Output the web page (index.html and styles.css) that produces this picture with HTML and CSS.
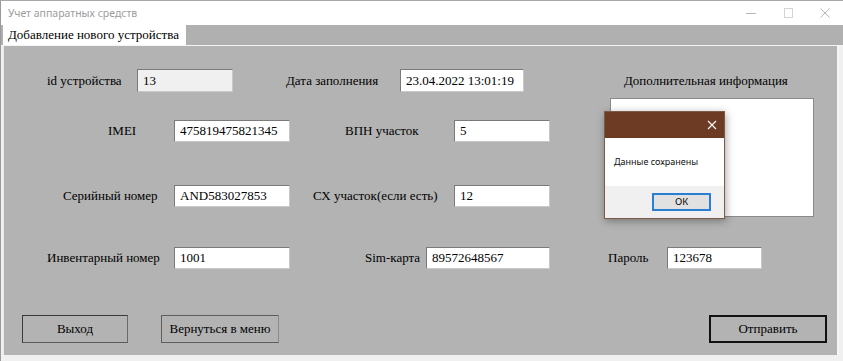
FILE: index.html
```html
<!DOCTYPE html>
<html lang="ru">
<head>
<meta charset="utf-8">
<title>Учет аппаратных средств</title>
<link rel="stylesheet" href="styles.css">
</head>
<body>
<div class="window">
  <div class="titlebar">
    <span class="title">Учет аппаратных средств</span>
    <div class="controls">
      <svg class="ctl" width="14" height="14" viewBox="0 0 14 14"><path d="M2 7.5h10" stroke="#b8b8b8" stroke-width="1"/></svg>
      <svg class="ctl" width="14" height="14" viewBox="0 0 14 14"><rect x="3.5" y="2.5" width="8" height="9" fill="none" stroke="#d4d4d4"/></svg>
      <svg class="ctl" width="14" height="14" viewBox="0 0 14 14"><path d="M2.5 2.5l9 9M11.5 2.5l-9 9" stroke="#b8b8b8" stroke-width="1"/></svg>
    </div>
  </div>
  <div class="tabstrip">
    <div class="tab">Добавление нового устройства</div>
  </div>
  <div class="panel">
    <div class="form">
      <div class="left">
        <div class="row r1">
          <span class="lbl l-id">id устройства</span>
          <span class="inp i-id ro">13</span>
          <span class="lbl l-date">Дата заполнения</span>
          <span class="inp i-date">23.04.2022 13:01:19</span>
        </div>
        <div class="row r2">
          <span class="lbl l-imei">IMEI</span>
          <span class="inp i-imei">475819475821345</span>
          <span class="lbl l-vpn">ВПН участок</span>
          <span class="inp i-vpn">5</span>
        </div>
        <div class="row r3">
          <span class="lbl l-ser">Серийный номер</span>
          <span class="inp i-ser">AND583027853</span>
          <span class="lbl l-sx">СХ участок(если есть)</span>
          <span class="inp i-sx">12</span>
        </div>
      </div>
      <div class="right">
        <div class="lbl l-info">Дополнительная информация</div>
        <div class="textarea"></div>
      </div>
    </div>
    <div class="row r4">
      <span class="lbl l-inv">Инвентарный номер</span>
      <span class="inp i-inv">1001</span>
      <span class="lbl l-sim">Sim-карта</span>
      <span class="inp i-sim">89572648567</span>
      <span class="lbl l-pwd">Пароль</span>
      <span class="inp i-pwd">123678</span>
    </div>
    <div class="row r5">
      <button class="btn b-exit">Выход</button>
      <button class="btn b-menu">Вернуться в меню</button>
      <button class="btn b-send">Отправить</button>
    </div>
  </div>
  <div class="dialog">
    <div class="dlg-title">
      <svg width="10" height="10" viewBox="0 0 10 10"><path d="M1 1l8 8M9 1l-8 8" stroke="#ffffff" stroke-width="1.1"/></svg>
    </div>
    <div class="dlg-body">Данные сохранены</div>
    <div class="dlg-foot"><span class="ok">ОК</span></div>
  </div>
</div>
</body>
</html>
```
FILE: styles.css
```css
* { box-sizing: border-box; }
html, body { margin: 0; padding: 0; }
body {
  width: 843px;
  height: 361px;
  overflow: hidden;
  background: #f0f0f0;
  font-family: "Liberation Serif", "Times New Roman", serif;
  font-size: 13px;
  color: #000;
}
.window {
  position: relative;
  width: 843px;
  height: 361px;
  border-top: 1px solid #a8a8a8;
  border-left: 1px solid #9a9a9a;
  background: #f0f0f0;
}
.titlebar {
  height: 24px;
  background: #fff;
  display: flex;
  align-items: center;
  justify-content: space-between;
  padding-left: 7px;
}
.title {
  font-family: "Noto Sans", "Open Sans", sans-serif;
  font-size: 10.5px;
  color: #9c9c9c;
}
.controls {
  display: flex;
  gap: 23px;
  padding-right: 11px;
}
.tabstrip {
  height: 21px;
  background: #b0b0b0;
  padding-left: 2px;
  display: flex;
  align-items: flex-end;
  border-bottom: 1px solid #f4f4f4;
}
.tab {
  height: 20px;
  width: 183px;
  background: #fff;
  padding-left: 5px;
  line-height: 19px;
  font-size: 13px;
  white-space: nowrap;
}
.panel {
  margin-left: 2px;
  width: 836px;
  height: 309px;
  background: #b3b3b3;
  border-left: 1px solid #e8e8e8;
  border-right: 2px solid #f6f6f6;
  padding-top: 23px;
}
.form { display: flex; }
.left { width: 600px; }
.row {
  display: flex;
  align-items: center;
  white-space: nowrap;
}
.lbl { display: block; flex: none; }
.inp {
  display: block;
  flex: none;
  height: 23px;
  background: #fff;
  border: 1px solid #7a7a7a;
  border-right-color: #c8c8c8;
  border-bottom-color: #c8c8c8;
  padding-left: 5px;
  line-height: 21px;
}
.inp.ro { background: #f0f0f0; }

.r1 { height: 23px; }
.l-id { margin-left: 43px; width: 73px; }
.i-id { margin-left: 17px; width: 96px; }
.l-date { margin-left: 53px; width: 94px; }
.i-date { margin-left: 20px; width: 124px; }

.r2 { height: 22px; margin-top: 28px; }
.r2 .inp, .r3 .inp, .r4 .inp { height: 22px; line-height: 20px; }
.l-imei { margin-left: 104px; width: 28px; }
.i-imei { margin-left: 38px; width: 116px; }
.l-vpn { margin-left: 55px; width: 73px; }
.i-vpn { margin-left: 36px; width: 96px; }

.r3 { height: 22px; margin-top: 43px; }
.l-ser { margin-left: 59px; width: 97px; }
.i-ser { margin-left: 14px; width: 116px; }
.l-sx { margin-left: 23px; width: 123px; }
.i-sx { margin-left: 18px; width: 96px; }

.right { flex: none; }
.l-info {
  margin-left: 20px;
  height: 23px;
  line-height: 23px;
}
.textarea {
  margin-top: 6px;
  margin-left: 6px;
  width: 204px;
  height: 119px;
  background: #fff;
  border: 1px solid #8a8a8a;
}

.r4 { height: 22px; margin-top: 30px; }
.l-inv { margin-left: 43px; width: 113px; }
.i-inv { margin-left: 14px; width: 116px; }
.l-sim { margin-left: 75px; width: 52px; }
.i-sim { margin-left: 9px; width: 124px; }
.l-pwd { margin-left: 58px; width: 42px; }
.i-pwd { margin-left: 17px; width: 95px; }

.r5 { height: 28px; margin-top: 46px; }
.btn {
  flex: none;
  height: 28px;
  font-family: "Liberation Serif", "Times New Roman", serif;
  font-size: 13px;
  color: #000;
  background: #b3b3b3;
  padding: 0;
}
.b-exit {
  margin-left: 18px;
  width: 106px;
  border: 1px solid #3a3a3a;
  border-right-color: #6a6a6a;
  border-bottom-color: #5a5a5a;
}
.b-menu {
  margin-left: 33px;
  width: 118px;
  border: 1px solid #5e5e5e;
  border-right-color: #8a8a8a;
}
.b-send {
  margin-left: 430px;
  width: 118px;
  border: 2px solid #111;
}

.dialog {
  position: absolute;
  left: 603px;
  top: 110px;
  width: 121px;
  height: 108px;
  background: #fff;
  border: 1px solid #7b5a48;
  box-shadow: 1px 2px 8px rgba(0,0,0,0.35);
  display: flex;
  flex-direction: column;
}
.dlg-title {
  height: 26px;
  background: #6d3b23;
  display: flex;
  align-items: center;
  justify-content: flex-end;
  padding-right: 7px;
}
.dlg-body {
  height: 48px;
  font-family: "Noto Sans", "Open Sans", sans-serif;
  font-size: 9px;
  color: #111;
  padding-left: 9px;
  line-height: 48px;
  white-space: nowrap;
}
.dlg-foot {
  flex: 1;
  background: #f0f0f0;
  padding-left: 47px;
  padding-top: 7px;
}
.ok {
  display: block;
  width: 59px;
  height: 18px;
  border: 2px solid #2a7fd4;
  background: #e1e1e1;
  font-family: "Noto Sans", "Open Sans", sans-serif;
  font-size: 9.5px;
  text-align: center;
  line-height: 14px;
}
```
